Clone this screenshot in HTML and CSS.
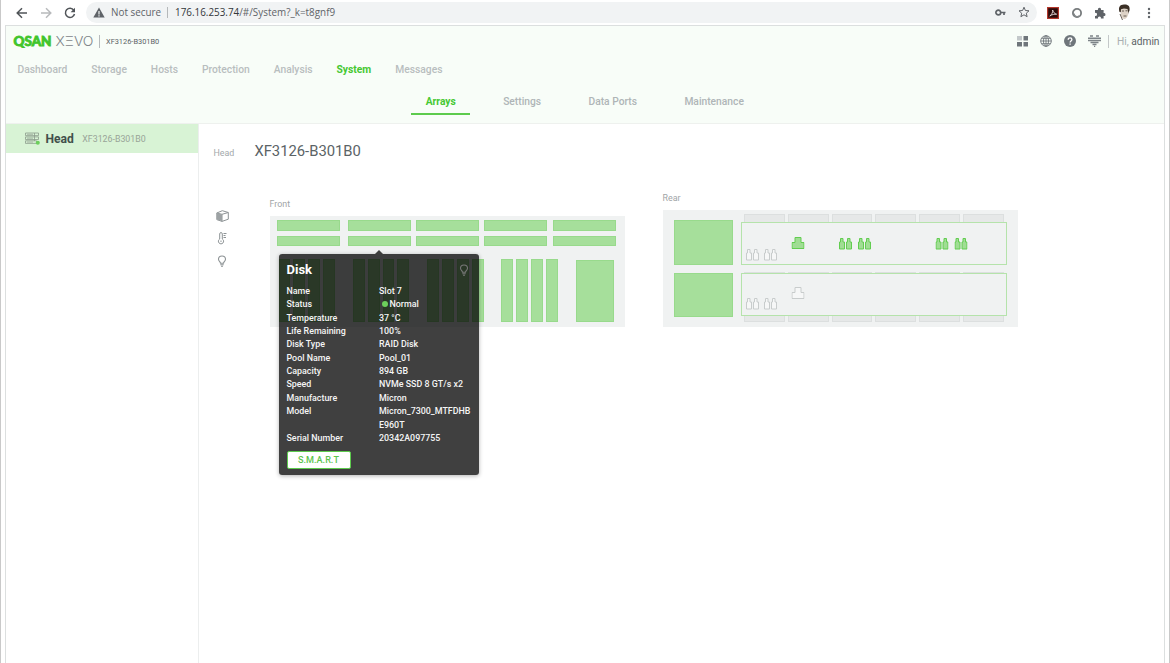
FILE: index.html
```
<!DOCTYPE html>
<html>
<head>
    <meta charset="utf-8">
    <title>QSAN XEVO</title>
    <link rel="stylesheet" href="styles.css">
</head>
<body>
    <svg class="defs" width="0" height="0">
        <symbol id="port-pair" viewBox="0 0 13 12">
            <path d="M1.500 .5h2.500v3.500h1.500v7H.5V4h1z"/>
            <path d="M8.500 .5h2.500v3.500h1.500v7h-5V4h1z"/>
        </symbol>
        <symbol id="port-lan" viewBox="0 0 13 12">
            <path d="M3.500 .5h6v5h3v6H.5v-6h3z"/>
        </symbol>
        <symbol id="bulb" viewBox="0 0 10 13">
            <path d="M3.500 8.200C3.500 7 1.500 6.200 1.500 4.300a3.500 3.300 0 0 1 7 0c0 1.900-2 2.700-2 3.900zM3.300 9.700h3.400M4 11.200h2" fill="none" stroke="currentColor" stroke-width="1.100"/>
        </symbol>
    </svg>

    <div class="browser-bar">
        <svg class="nav-icon" viewBox="0 0 12 12"><path d="M11 6H1.500M6 1.200L1.200 6 6 10.800"/></svg>
        <svg class="nav-icon disabled" viewBox="0 0 12 12"><path d="M1 6h9.500M6 1.200L10.800 6 6 10.800"/></svg>
        <svg class="nav-icon" viewBox="0 0 12 12"><path d="M9.800 3.200A4.600 4.600 0 1 0 10.500 7"/><path d="M11 .8v4.400H6.600z" class="solid"/></svg>
        <div class="address">
            <svg class="warn" viewBox="0 0 12 11"><path d="M6 .4L11.700 10.600H.3z" fill="#5f6368"/><path d="M6 4v3.400M6 8.200v1.200" stroke="#f1f3f4" stroke-width="1.200"/></svg>
            <span class="secure">Not secure</span>
            <span class="url"><b>176.16.253.74</b>/#/System?_k=t8gnf9</span>
            <svg class="key" viewBox="0 0 11 7"><path d="M3.300 1.100a2.200 2.200 0 1 0 0 4.800 2.200 2.200 0 0 0 0-4.800zM5.500 3.500h5M9 3.500v2.400" fill="none" stroke="#5f6368" stroke-width="1.700"/></svg>
            <svg class="star" viewBox="0 0 12 12"><path d="M6 1.200l1.400 3.300 3.600.3-2.700 2.400.8 3.500L6 8.800l-3.100 1.900.8-3.500L1 4.800l3.600-.3z" fill="none" stroke="#5f6368"/></svg>
        </div>
        <svg class="ext pdf" viewBox="0 0 12 12"><rect x=".6" y=".6" width="10.800" height="10.800" fill="#2b0a0a" stroke="#b5372c" stroke-width="1.200"/><path d="M2.800 9C5 7.500 6 5 5.600 3c1 2.400 1.800 3.800 4 4.200-2-.2-4.600.3-6.800 1.800z" fill="none" stroke="#e9dcdc" stroke-width=".9"/></svg>
        <svg class="ext ring" viewBox="0 0 12 12"><circle cx="6" cy="6" r="4.100" fill="#fff" stroke="#777b7d" stroke-width="1.800"/><path d="M3 6.500a3.200 3.200 0 0 0 5.500 2.200" fill="none" stroke="#85898b" stroke-width="1.500"/></svg>
        <svg class="ext puzzle" viewBox="0 0 12 12"><path d="M1 3h3a1.600 1.600 0 1 1 3 0h2.600v3a1.500 1.500 0 1 1 0 2.900V11.500H6.900a1.500 1.500 0 1 0-2.900 0H1V8.700a1.500 1.500 0 1 0 0-2.800z" fill="#5f6368"/></svg>
        <svg class="ext avatar" viewBox="0 0 13 17"><path d="M1.500 8C0 3 2 .8 6 .6c4.500-.3 6.200 2 5.500 6l-1.200 3z" fill="#3b3026"/><path d="M3 5.200l3-.6 3.500.4.9 3.600c0 3-1.400 5.800-3.400 6.400-2 .3-3.600-1.800-4.300-4.500z" fill="#ddd2c6"/><path d="M4 7h2M7.500 6.800h2M5.500 12h3M2 10l2.500 6" stroke="#5b5148" stroke-width=".9"/></svg>
        <svg class="ext menu" viewBox="0 0 4 12"><circle cx="2" cy="2" r="1.200"/><circle cx="2" cy="6" r="1.200"/><circle cx="2" cy="10" r="1.200"/></svg>
    </div>

    <div class="app">
        <header>
            <div class="top-row">
                <svg class="logo" width="81" height="20" viewBox="0 0 81 20">
                    <text x="0.500" y="15" class="logo-qsan" textLength="38" lengthAdjust="spacingAndGlyphs">QSAN</text>
                    <text x="42.500" y="15" class="logo-xevo" textLength="38" lengthAdjust="spacingAndGlyphs">XΞVO</text>
                </svg>
                <span class="array-name">XF3126-B301B0</span>
                <div class="tools">
                    <svg width="12" height="12" viewBox="0 0 12 12"><path d="M0 1h5v4.500H0z" fill="#c3c8ca"/><path d="M6.500 1H11v4.500H6.500zM0 7h5v4.500H0zM6.500 7H11v4.500H6.500z" fill="#6f767b"/></svg>
                    <svg width="12" height="12" viewBox="0 0 12 12" fill="none" stroke="#6f767b" stroke-width=".9"><circle cx="6" cy="6" r="5.300"/><ellipse cx="6" cy="6" rx="2.500" ry="5.300"/><path d="M6 .7v10.600M.7 6h10.600M1.500 3.300h9M1.500 8.700h9"/></svg>
                    <svg width="12" height="12" viewBox="0 0 12 12"><circle cx="6" cy="6" r="6" fill="#6f767b"/><path d="M4.200 4.700C4.200 2.200 7.900 2.300 7.900 4.600 7.900 5.900 6.100 6 6.100 7.400M6.100 8.400v1.400" fill="none" stroke="#fff" stroke-width="1.300"/></svg>
                    <svg width="13" height="12" viewBox="0 0 13 12"><path d="M2 1h3M8 1h3M0 3.200h13M0 5.400h13M2.500 7.600h8M4.500 9.600h4M6 11.400h1.200" stroke="#7d8488" stroke-width="1.500"/></svg>
                    <span class="user">Hi, <b>admin</b></span>
                </div>
            </div>
            <nav class="main-nav">
                <a>Dashboard</a>
                <a>Storage</a>
                <a>Hosts</a>
                <a>Protection</a>
                <a>Analysis</a>
                <a class="active">System</a>
                <a>Messages</a>
            </nav>
            <nav class="sub-nav">
                <a class="active">Arrays</a>
                <a>Settings</a>
                <a>Data Ports</a>
                <a>Maintenance</a>
            </nav>
        </header>

        <div class="content">
            <aside>
                <div class="side-item">
                    <svg width="15" height="13" viewBox="0 0 15 13"><path d="M.5 1h13v2.600H.5zM.5 4.900h13v2.600H.5zM.5 8.800h11v2.600H.5zM9.500 1v8" fill="none" stroke="#8b9a8b" stroke-width=".8"/><path d="M2 2.300h6M2 6.200h6M2 10.100h6" stroke="#9cab9c" stroke-width=".8"/><circle cx="12.800" cy="10.800" r="2" fill="#6ccf5c"/></svg>
                    <b>Head</b>
                    <span>XF3126-B301B0</span>
                </div>
            </aside>

            <main>
                <div class="title">
                    <span>Head</span>
                    <h1>XF3126-B301B0</h1>
                </div>
                <div class="views">
                    <div class="view-icons">
                        <svg width="13" height="12" viewBox="0 0 13 12"><path d="M.8 3L6.300.7l6 1.800v6.700L6 11.400.8 9.600zM.8 3L6 4.300l6.300-1.800M6 4.300v7" fill="none" stroke="#8d9395"/><path d="M1 3.200l5 1.200v6.800L1 9.500z" fill="#9da2a4"/></svg>
                        <svg width="10" height="13" viewBox="0 0 10 13"><path d="M2.700 7V1.900a1.300 1.300 0 0 1 2.600 0V7a2.600 2.600 0 1 1-2.600 0zM4 8.500v1.500M6.500 1.500H9.500M6.500 3.500h2M6.500 5.500h2.500" fill="none" stroke="#8d9395"/></svg>
                        <svg width="10" height="13"><use href="#bulb"/></svg>
                    </div>

                    <section class="front">
                        <label>Front</label>
                        <div class="chassis">
                            <div class="slots">
                                <i></i><i></i><i></i><i></i><i></i>
                                <i></i><i></i><i></i><i></i><i></i>
                            </div>
                            <div class="bays">
                                <div class="bay-group"><i></i><i></i><i></i><i></i></div>
                                <div class="bay-group"><i></i><i></i><i></i><i></i></div>
                                <div class="bay-group"><i></i><i></i><i></i><i></i></div>
                                <div class="bay-group"><i></i><i></i><i></i><i></i></div>
                                <i class="panel"></i>
                            </div>
                            <div class="tooltip">
                                <div class="tip-head">
                                    <h2>Disk</h2>
                                    <svg width="10" height="13"><use href="#bulb"/></svg>
                                </div>
                                <dl>
                                    <dt>Name</dt><dd>Slot 7</dd>
                                    <dt>Status</dt><dd><span class="dot"></span>Normal</dd>
                                    <dt>Temperature</dt><dd>37 °C</dd>
                                    <dt>Life Remaining</dt><dd>100%</dd>
                                    <dt>Disk Type</dt><dd>RAID Disk</dd>
                                    <dt>Pool Name</dt><dd>Pool_01</dd>
                                    <dt>Capacity</dt><dd>894 GB</dd>
                                    <dt>Speed</dt><dd>NVMe SSD 8 GT/s x2</dd>
                                    <dt>Manufacture</dt><dd>Micron</dd>
                                    <dt>Model</dt><dd>Micron_7300_MTFDHB<br>E960T</dd>
                                    <dt>Serial Number</dt><dd>20342A097755</dd>
                                </dl>
                                <button type="button">S.M.A.R.T</button>
                            </div>
                        </div>
                    </section>

                    <section class="rear">
                        <label>Rear</label>
                        <div class="chassis">
                            <div class="psus"><i></i><i></i></div>
                            <div class="controllers">
                                <div class="fans"><i></i><i></i><i></i><i></i><i></i><i></i></div>
                                <div class="controller">
                                    <svg width="264" height="41" viewBox="0 0 264 41">
                                        <g class="off">
                                            <use href="#port-pair" x="4" y="26" width="13" height="12"/>
                                            <use href="#port-pair" x="22" y="26" width="13" height="12"/>
                                        </g>
                                        <g class="on">
                                            <use href="#port-lan" x="49.500" y="14" width="13" height="12"/>
                                            <use href="#port-pair" x="97" y="15" width="13" height="12"/>
                                            <use href="#port-pair" x="116" y="15" width="13" height="12"/>
                                            <use href="#port-pair" x="193.500" y="15" width="13" height="12"/>
                                            <use href="#port-pair" x="212.500" y="15" width="13" height="12"/>
                                        </g>
                                    </svg>
                                </div>
                                <div class="fans sliver"><i></i><i></i><i></i><i></i><i></i><i></i></div>
                                <div class="controller">
                                    <svg width="264" height="41" viewBox="0 0 264 41">
                                        <g class="off">
                                            <use href="#port-lan" x="49.500" y="13" width="13" height="12"/>
                                            <use href="#port-pair" x="4" y="24" width="13" height="12"/>
                                            <use href="#port-pair" x="22" y="24" width="13" height="12"/>
                                        </g>
                                    </svg>
                                </div>
                                <div class="fans bottom"><i></i><i></i><i></i><i></i><i></i><i></i></div>
                            </div>
                        </div>
                    </section>
                </div>
            </main>
        </div>
    </div>
</body>
</html>
```
FILE: styles.css
```
* {
    box-sizing: border-box;
}

body {
    margin: 0;
    height: 663px;
    overflow: hidden;
    background: #fff;
    border-left: 1px solid #c9c9c9;
    border-right: 1px solid #c9c9c9;
    font-family: Roboto, sans-serif;
    color: #5b6366;
}

svg {
    display: block;
    flex: none;
}

.defs {
    position: absolute;
}

/* browser toolbar */
.browser-bar {
    display: flex;
    align-items: center;
    height: 25px;
    margin: 0 4px;
    padding-left: 11px;
    font-family: "Open Sans", "Noto Sans", sans-serif;
    font-size: 9.9px;
    color: #5f6368;
}

.nav-icon {
    width: 12px;
    height: 12px;
    margin-right: 12px;
    fill: none;
    stroke: #505458;
    stroke-width: 1.5;
}

.nav-icon.disabled {
    stroke: #b8babc;
}

.nav-icon .solid {
    fill: #505458;
    stroke: none;
}

.address {
    display: flex;
    align-items: center;
    width: 951px;
    height: 21px;
    margin: -1px 0 0 -2px;
    padding: 0 7.5px 0 7px;
    border-radius: 11px;
    background: #f1f3f4;
}

.warn {
    width: 12px;
    height: 11px;
    margin-right: 6px;
}

.secure {
    width: 56px;
    white-space: nowrap;
}

.url {
    padding-left: 7px;
    border-left: 1px solid #b5b8ba;
    line-height: 11px;
    white-space: nowrap;
}

.url b {
    font-weight: 400;
    color: #33373a;
}

.key {
    width: 11px;
    height: 7px;
    margin-left: auto;
}

.star {
    width: 12px;
    height: 12px;
    margin: 0 0 0 12px;
}

.ext {
    width: 12px;
    height: 12px;
    margin-left: 12px;
}

.ext.pdf {
    margin-left: 10px;
}

.ext.puzzle {
    margin-left: 11px;
}

.ext.avatar {
    width: 13px;
    height: 17px;
}

.ext.menu {
    width: 4px;
    margin-left: 16px;
    fill: #5f6368;
}

/* app header */
.app {
    display: flex;
    flex-direction: column;
    height: 638px;
    margin: 0 4px;
    border: 1px solid #dcdfdf;
    border-bottom: 0;
}

header {
    height: 98px;
    background: #f8fdf8;
    border-bottom: 1px solid #eef1ee;
}

.top-row {
    display: flex;
    align-items: center;
    height: 30px;
    padding: 0 4.5px 0 7px;
}

.logo {
    overflow: visible;
}

.logo-qsan {
    font: 900 12.5px Lato, sans-serif;
    fill: #41c52b;
    stroke: #41c52b;
    stroke-width: .8;
}

.logo-xevo {
    font: 300 13px Inter, sans-serif;
    fill: #7f8589;
}

.array-name {
    margin-left: 5px;
    padding-left: 6px;
    border-left: 1px solid #b6babc;
    font-size: 7.4px;
    line-height: 13px;
}

.tools {
    display: flex;
    align-items: center;
    gap: 11.7px;
    margin-left: auto;
}

.user {
    margin-left: -4px;
    padding-left: 7.5px;
    border-left: 1px solid #c4c8c9;
    font-size: 10.2px;
    line-height: 13px;
    color: #a9afb1;
}

.user b {
    font-weight: 400;
    color: #5b6366;
}

.main-nav {
    display: flex;
    gap: 23.9px;
    padding: 8px 0 0 11.5px;
    font-size: 10.3px;
    font-weight: 500;
    line-height: 12px;
    color: #b8bebf;
}

.sub-nav {
    display: flex;
    gap: 18px;
    margin: 20px 0 0 405px;
    font-size: 10.25px;
    font-weight: 500;
    line-height: 12px;
    color: #afb5b7;
}

.sub-nav a {
    height: 19px;
    padding: 0 14.7px;
}

.main-nav .active,
.sub-nav .active {
    font-weight: 700;
    color: #46c832;
}

.sub-nav .active {
    border-bottom: 2px solid #5dcb4d;
}

/* body */
.content {
    display: flex;
    flex: 1;
}

aside {
    width: 193px;
    border-right: 1px solid #eceeee;
}

.side-item {
    display: flex;
    align-items: center;
    height: 29px;
    padding-left: 19px;
    background: #d8f3d5;
    font-size: 8.8px;
    color: #98a498;
}

.side-item b {
    margin: 0 8.5px 0 5.5px;
    font-size: 12.1px;
    color: #42504a;
}

main {
    flex: 1;
    padding: 18px 0 0 14.5px;
}

.title {
    display: flex;
    align-items: baseline;
    height: 47px;
    font-size: 8.9px;
    color: #a3a9ab;
}

.title h1 {
    margin: 0 0 0 20px;
    font-size: 14.8px;
    font-weight: 400;
    line-height: 19px;
    color: #5b6366;
}

.views {
    display: flex;
    align-items: flex-start;
}

.view-icons {
    display: flex;
    flex-direction: column;
    align-items: center;
    gap: 10px;
    width: 17px;
    margin-top: 21px;
    color: #8d9395;
}

.front {
    margin: 10px 0 0 39px;
}

.rear {
    margin: 4px 0 0 38px;
}

section label {
    display: block;
    height: 17px;
    font-size: 8.9px;
    line-height: 11px;
    color: #9fa5a7;
}

.chassis {
    position: relative;
    width: 355px;
    background: #f0f2f2;
}

.front .chassis {
    height: 111px;
    padding: 4.4px 8.5px 0 7.5px;
}

.slots {
    display: grid;
    grid-template-columns: 70.5px 68.5px 68px 69px 63px;
    row-gap: 5px;
}

.slots i,
.bays i,
.psus i {
    background: #a6df9b;
    border: 1px solid #98da8c;
}

.slots i {
    width: 63px;
    height: 10.5px;
}

.bays {
    display: flex;
    margin: 12.6px 0 0 1.5px;
}

.bay-group {
    display: flex;
    gap: 3px;
    width: 74.3px;
}

.bay-group i {
    width: 11.9px;
    height: 63px;
}

.bays .panel {
    width: 38px;
    height: 62px;
    margin-top: 1px;
}

/* rear view */
.rear .chassis {
    display: flex;
    height: 117px;
    padding: 4px 11px 0;
}

.psus {
    display: flex;
    flex-direction: column;
    gap: 8px;
    margin-top: 6px;
}

.psus i {
    width: 59px;
    height: 44.5px;
}

.controllers {
    width: 266px;
    margin-left: 8.5px;
}

.fans {
    display: flex;
    gap: 3px;
    height: 8px;
    padding: 0 3px;
}

.fans i {
    flex: 1;
    background: #e6e8e8;
    border: 1px solid #dcdfdf;
    border-bottom: 0;
}

.fans.sliver {
    height: 1px;
    margin-top: 7px;
}

.fans.bottom {
    height: 6px;
}

.fans.bottom i {
    border-top: 0;
    border-bottom: 1px solid #dcdfdf;
}

.controller {
    height: 43px;
    border: 1px solid #b5e3ab;
    background: #f0f2f2;
}

.off {
    fill: #f6f7f7;
    stroke: #c8cccc;
}

.on {
    fill: #a0dd94;
    stroke: #62cd50;
}

/* disk details */
.tooltip {
    position: absolute;
    top: 38.4px;
    left: 9.5px;
    width: 200px;
    height: 221px;
    padding: 8px 8px 8px 7.5px;
    border-radius: 3px;
    background: rgba(0, 0, 0, 0.75);
    box-shadow: 0 1px 4px rgba(0, 0, 0, 0.3);
    font-size: 8.9px;
    line-height: 13.35px;
    color: #f5f5f5;
}

.tooltip::before {
    content: "";
    position: absolute;
    top: -4px;
    left: 96px;
    border: 4px solid transparent;
    border-top: 0;
    border-bottom-color: #3d3e3d;
}

.tip-head {
    display: flex;
    justify-content: space-between;
    height: 22.7px;
    padding-right: 2.5px;
    color: #777;
}

.tip-head svg {
    margin-top: 2px;
}

h2 {
    margin: 0;
    font-size: 13px;
    line-height: 16px;
    color: #fff;
}

dl {
    display: grid;
    grid-template-columns: 92.5px 1fr;
    margin: 0;
    font-weight: 500;
}

dd {
    margin: 0;
}

.dot {
    display: inline-block;
    width: 6px;
    height: 6px;
    margin: 0 2px 0 2.5px;
    border-radius: 50%;
    background: #6ccf5c;
}

.tooltip button {
    display: block;
    width: 64px;
    height: 18px;
    margin-top: 6px;
    padding: 0;
    border: 1px solid #5dcb4d;
    border-radius: 2px;
    background: #fff;
    font: 500 9.1px/14px Roboto, sans-serif;
    color: #5dc44d;
}
```
